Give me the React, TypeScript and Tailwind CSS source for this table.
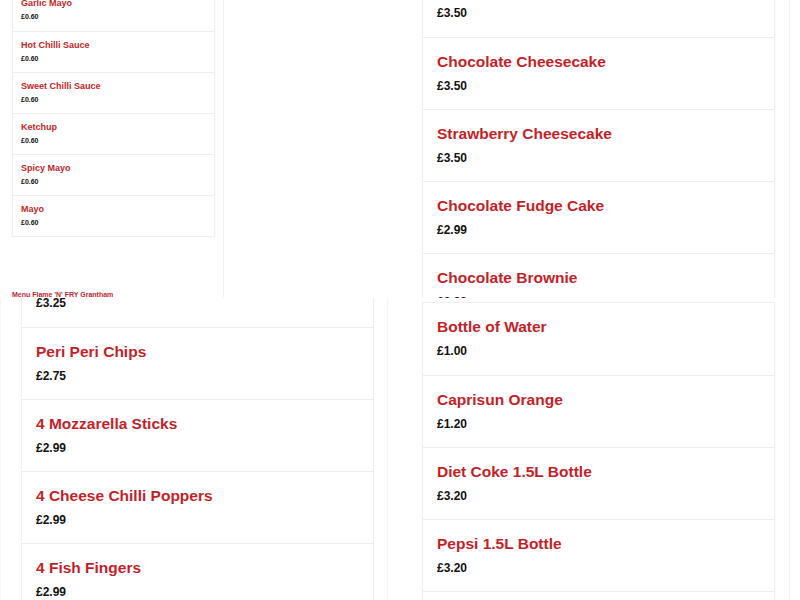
const RED = 'text-[#c41f28]'

interface Item {
  name: string
  price: string
}

const sauces: Item[] = [
  { name: 'Garlic Mayo', price: '£0.60' },
  { name: 'Hot Chilli Sauce', price: '£0.60' },
  { name: 'Sweet Chilli Sauce', price: '£0.60' },
  { name: 'Ketchup', price: '£0.60' },
  { name: 'Spicy Mayo', price: '£0.60' },
  { name: 'Mayo', price: '£0.60' },
]

const desserts: Item[] = [
  { name: 'Blueberry Cheesecake', price: '£3.50' },
  { name: 'Chocolate Cheesecake', price: '£3.50' },
  { name: 'Strawberry Cheesecake', price: '£3.50' },
  { name: 'Chocolate Fudge Cake', price: '£2.99' },
  { name: 'Chocolate Brownie', price: '£2.99' },
]

const sides: Item[] = [
  { name: 'Chips', price: '£3.25' },
  { name: 'Peri Peri Chips', price: '£2.75' },
  { name: '4 Mozzarella Sticks', price: '£2.99' },
  { name: '4 Cheese Chilli Poppers', price: '£2.99' },
  { name: '4 Fish Fingers', price: '£2.99' },
]

const drinks: Item[] = [
  { name: 'Bottle of Water', price: '£1.00' },
  { name: 'Caprisun Orange', price: '£1.20' },
  { name: 'Diet Coke 1.5L Bottle', price: '£3.20' },
  { name: 'Pepsi 1.5L Bottle', price: '£3.20' },
  { name: 'Pepsi Max 1.5L Bottle', price: '£3.20' },
]

function SmallCard({ items }: { items: Item[] }) {
  return (
    <div className="w-[203px] bg-white border border-[#eeeeee] shadow-[0_0_2px_rgba(0,0,0,0.04)]">
      {items.map((item, i) => (
        <div
          key={item.name}
          className={`h-[41px] pl-[8px] pt-[8px] ${i > 0 ? 'border-t border-[#eeeeee]' : ''}`}
        >
          <p className={`text-[9px] leading-[11px] font-bold ${RED}`}>{item.name}</p>
          <p className="mt-[4px] text-[7px] leading-[8px] font-bold text-[#111]">{item.price}</p>
        </div>
      ))}
    </div>
  )
}

function BigCard({ items, className }: { items: Item[]; className?: string }) {
  return (
    <div className={`w-[353px] shrink-0 bg-white border border-[#eeeeee] shadow-[0_0_2px_rgba(0,0,0,0.04)] ${className ?? ''}`}>
      {items.map((item, i) => (
        <div
          key={item.name}
          className={`h-[72px] pl-[14px] pt-[14px] ${i > 0 ? 'border-t border-[#ececec]' : ''}`}
        >
          <p className={`text-[15.5px] leading-[20px] font-bold ${RED}`}>{item.name}</p>
          <p className="mt-[6px] text-[12px] leading-[16px] font-bold text-[#111]">{item.price}</p>
        </div>
      ))}
    </div>
  )
}

export default function App() {
  return (
    <div className="w-[800px] h-[600px] overflow-hidden bg-white font-['Liberation_Sans',Arial,sans-serif]">
      <div className="h-[298px] overflow-hidden flex">
        <div className="w-[224px] shrink-0 flex flex-col pl-[12px] border-r border-[#f2f2f2]">
          <div className="-mt-[11px]">
            <SmallCard items={sauces} />
          </div>
          <p className="mt-auto text-[7px] leading-[7px] font-bold text-[#b52a35]">
            Menu Flame 'N' FRY Grantham
          </p>
        </div>
        <div className="w-[198px] shrink-0" />
        <BigCard items={desserts} className="-mt-[36px] self-start" />
        <div className="w-[15px] shrink-0 border-r border-[#f2f2f2]" />
      </div>

      <div className="h-[302px] overflow-hidden flex">
        <div className="w-[21px] shrink-0 border-l border-[#f6f6f6]" />
        <BigCard items={sides} className="-mt-[44px] self-start" />
        <div className="w-[14px] shrink-0 border-r border-[#f4f4f4]" />
        <div className="w-[34px] shrink-0" />
        <BigCard items={drinks} className="mt-[4px] self-start" />
        <div className="w-[15px] shrink-0 border-r border-[#f2f2f2]" />
      </div>
    </div>
  )
}
